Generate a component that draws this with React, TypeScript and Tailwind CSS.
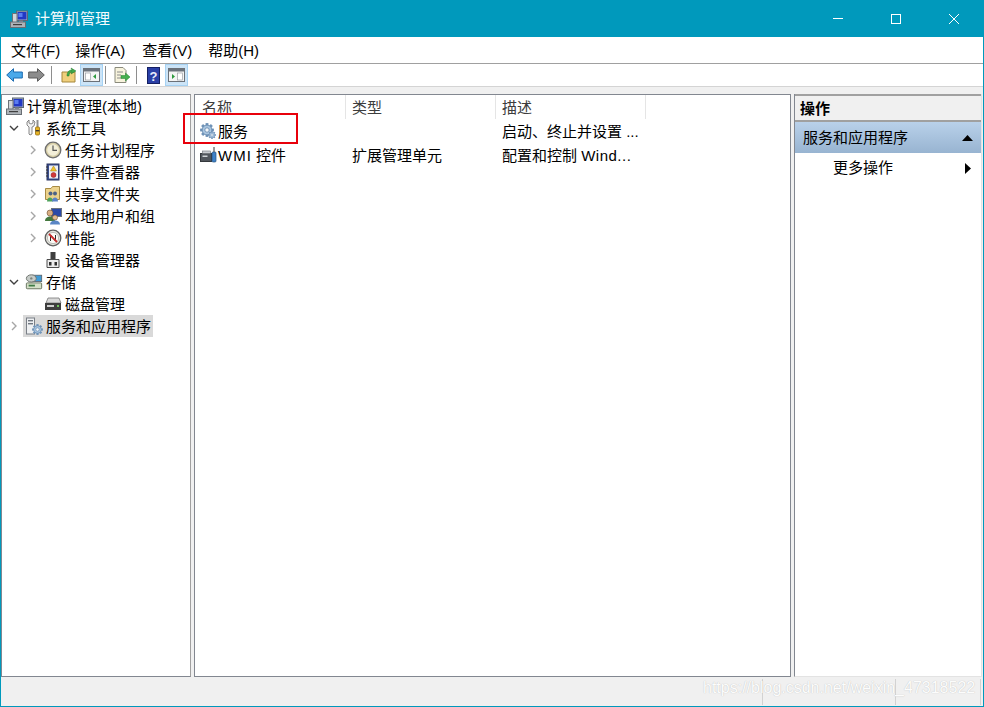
import React from "react";

const FONT = "font-['Liberation_Sans','Noto_Sans_CJK_SC',sans-serif]";

const Computer = () => (
  <svg width="18" height="18" viewBox="0 0 18 18">
    <rect x="6.5" y="1" width="11" height="9.5" fill="#aab2be" stroke="#5b6675" />
    <rect x="7.5" y="2" width="9" height="7.5" fill="#2238c4" />
    <rect x="8.5" y="3" width="4" height="4" fill="#5a7cf0" />
    <rect x="2.5" y="3.5" width="4.5" height="10" fill="#d2d5d8" stroke="#6d7278" />
    <rect x="0.5" y="12" width="15" height="5.5" fill="#aeb3b8" stroke="#686e74" />
    <rect x="3" y="14" width="9" height="1.2" fill="#3f3f3f" />
    <rect x="9" y="10.5" width="4" height="1.5" fill="#7c8490" />
  </svg>
);
const Tools = () => (
  <svg width="16" height="18" viewBox="0 0 16 18">
    <path d="M3 1 L3 4 L5 5 L7 4 L7 1 L9 3 L8 7 L6 8 L6 15 L4 16 L3 15 L3 8 L1 6 L1 3 Z" fill="#f2f2f2" stroke="#6b6b6b" strokeWidth="0.8" />
    <rect x="10.5" y="1" width="2" height="7" fill="#8f8f8f" />
    <rect x="9.5" y="8" width="4" height="8" rx="1" fill="#e6b325" stroke="#97700e" strokeWidth="0.8" />
    <rect x="9.7" y="11" width="3.6" height="1.4" fill="#3a3a3a" />
  </svg>
);
const Clock = () => (
  <svg width="18" height="18" viewBox="0 0 18 18">
    <circle cx="9" cy="9" r="7.8" fill="#d8cfa8" stroke="#6f6f6f" strokeWidth="1.3" />
    <circle cx="9" cy="9" r="5.8" fill="#f3efd9" />
    <path d="M9 4.5V9.3H13" fill="none" stroke="#555" strokeWidth="1.2" />
  </svg>
);
const EventLog = () => (
  <svg width="16" height="18" viewBox="0 0 16 18">
    <rect x="2" y="1" width="12" height="16" fill="#3b4f8f" stroke="#2a3560" />
    <rect x="4" y="2.5" width="9" height="13" fill="#eef0f5" />
    <path d="M8.5 3 L11.5 8 H5.5Z" fill="#efc22c" stroke="#a27e10" strokeWidth="0.5" />
    <circle cx="8.5" cy="12" r="2.5" fill="#d23a3a" stroke="#8c1f1f" strokeWidth="0.5" />
    <path d="M1 4h2M1 7h2M1 10h2M1 13h2" stroke="#333" strokeWidth="1" />
  </svg>
);
const SharedFolder = () => (
  <svg width="18" height="18" viewBox="0 0 18 18">
    <path d="M1.5 3.5 H7 L8.5 1.5 H15.5 V14.5 H1.5Z" fill="#ecd28c" stroke="#a88b45" />
    <circle cx="6.5" cy="8.5" r="2" fill="#4d6285" />
    <circle cx="11" cy="8.5" r="2" fill="#4d6285" />
    <path d="M3 16.5 C3 11 9 11 9 16.5Z" fill="#4fa25b" />
    <path d="M8 16.5 C8 11 14 11 14 16.5Z" fill="#5b83c6" />
  </svg>
);
const Users = () => (
  <svg width="18" height="18" viewBox="0 0 18 18">
    <rect x="7.5" y="1.5" width="10" height="8" fill="#2a49a8" stroke="#6b7380" />
    <circle cx="6" cy="6" r="3" fill="#d9ae83" stroke="#6c4e30" strokeWidth="0.6" />
    <path d="M1 14 C1 8 11 8 11 14Z" fill="#44783e" />
    <circle cx="11" cy="10.5" r="2.5" fill="#e3bb92" stroke="#6c4e30" strokeWidth="0.6" />
    <path d="M6 17.5 C6 12 16 12 16 17.5Z" fill="#5a86c5" />
  </svg>
);
const Perf = () => (
  <svg width="18" height="18" viewBox="0 0 18 18">
    <circle cx="9" cy="9" r="7.8" fill="#e4e4dc" stroke="#5f5f5f" strokeWidth="1.3" />
    <circle cx="9" cy="9" r="5.6" fill="#fbfbf6" stroke="#9a9a9a" strokeWidth="0.6" />
    <path d="M6.5 12V6L11.5 12V6" fill="none" stroke="#2b2b2b" strokeWidth="1" />
    <path d="M5 5L13 13" stroke="#c92a2a" strokeWidth="1.8" />
  </svg>
);
const DeviceMgr = () => (
  <svg width="16" height="18" viewBox="0 0 16 18">
    <rect x="5.5" y="1" width="5" height="7" fill="#3f3f3f" />
    <path d="M2 8.5 H14 V16.5 H2Z" fill="#ededed" stroke="#4d4d4d" />
    <rect x="4" y="11" width="2.5" height="3.5" fill="#2f2f2f" />
    <rect x="9.5" y="11" width="2.5" height="3.5" fill="#2f2f2f" />
  </svg>
);
const Storage = () => (
  <svg width="20" height="18" viewBox="0 0 20 18">
    <rect x="8.5" y="1.5" width="10" height="7" fill="#3f9bd6" stroke="#5b6772" />
    <ellipse cx="7" cy="5" rx="5.5" ry="4" fill="#c6cbc7" stroke="#6a6f6a" />
    <circle cx="7" cy="5" r="1.3" fill="#7c827c" />
    <rect x="1.5" y="10" width="17" height="6.5" rx="1" fill="#d5e0c8" stroke="#5f6b56" />
    <rect x="4" y="12" width="7" height="2" fill="#3e7b45" />
  </svg>
);
const Disk = () => (
  <svg width="18" height="18" viewBox="0 0 18 18">
    <path d="M4 3 H15 L17 8 H2Z" fill="#d9d9d9" stroke="#777" strokeWidth="0.8" />
    <rect x="1" y="8" width="16" height="7" fill="#3e3e3e" />
    <rect x="3" y="10" width="7" height="2" fill="#cfcfcf" />
    <rect x="13" y="10" width="2" height="2" fill="#6ec35a" />
  </svg>
);
const Gear = ({ size = 14 }: { size?: number }) => {
  const teeth = [0, 45, 90, 135, 180, 225, 270, 315];
  return (
    <svg width={size} height={size} viewBox="0 0 16 16" className="block">
      {teeth.map((a) => (
        <rect key={a} x="6.4" y="0.1" width="3.2" height="3.8" fill="#6f93b8" transform={`rotate(${a} 8 8)`} />
      ))}
      <circle cx="8" cy="8" r="5.6" fill="#a9c5e0" stroke="#5f84aa" strokeWidth="0.9" />
      <circle cx="8" cy="8" r="2.5" fill="#f4f7fa" stroke="#5f84aa" strokeWidth="0.9" />
    </svg>
  );
};
const ServiceIcon = () => (
  <span className="relative block w-[16px] h-[16px] shrink-0">
    <Gear size={14} />
    <span className="absolute right-0 bottom-0"><Gear size={8} /></span>
  </span>
);
const ServicesApps = () => (
  <span className="relative block w-[18px] h-[18px]">
    <svg width="18" height="18" viewBox="0 0 18 18" className="block">
      <rect x="1.5" y="1" width="8" height="16" fill="#eef0f2" stroke="#7b8087" />
      <rect x="3" y="3" width="5" height="1.4" fill="#6f7680" />
      <rect x="3" y="6" width="5" height="1.4" fill="#6f7680" />
    </svg>
    <span className="absolute right-0 bottom-0"><Gear size={11} /></span>
  </span>
);
const Wmi = () => (
  <svg width="17" height="18" viewBox="0 0 17 18" className="block shrink-0">
    <rect x="0.5" y="7.5" width="11" height="8" fill="#51565c" stroke="#34383c" />
    <rect x="2.5" y="5" width="8" height="2.5" fill="#c9ccd0" stroke="#6b7076" strokeWidth="0.6" />
    <rect x="2.5" y="9.5" width="5" height="1.5" fill="#cfd3d6" />
    <path d="M14 1 V6" stroke="#9a9a9a" strokeWidth="2" />
    <rect x="12" y="6" width="4" height="10" rx="1" fill="#3f82c9" stroke="#25537f" strokeWidth="0.7" />
  </svg>
);
const Chevron = ({ open }: { open?: boolean }) => (
  <svg width="10" height="10" viewBox="0 0 10 10" className="block">
    {open ? (
      <path d="M1 3 L5 7 L9 3" fill="none" stroke="#404040" strokeWidth="1.4" />
    ) : (
      <path d="M3 1 L7 5 L3 9" fill="none" stroke="#a6a6a6" strokeWidth="1.4" />
    )}
  </svg>
);

type Row = { label: string; indent: string; chevron?: "open" | "closed"; icon: React.ReactNode; selected?: boolean };

const rows: Row[] = [
  { label: "计算机管理(本地)", indent: "pl-[2px]", icon: <Computer /> },
  { label: "系统工具", indent: "pl-[7px]", chevron: "open", icon: <Tools /> },
  { label: "任务计划程序", indent: "pl-[26px]", chevron: "closed", icon: <Clock /> },
  { label: "事件查看器", indent: "pl-[26px]", chevron: "closed", icon: <EventLog /> },
  { label: "共享文件夹", indent: "pl-[26px]", chevron: "closed", icon: <SharedFolder /> },
  { label: "本地用户和组", indent: "pl-[26px]", chevron: "closed", icon: <Users /> },
  { label: "性能", indent: "pl-[26px]", chevron: "closed", icon: <Perf /> },
  { label: "设备管理器", indent: "pl-[40px]", icon: <DeviceMgr /> },
  { label: "存储", indent: "pl-[7px]", chevron: "open", icon: <Storage /> },
  { label: "磁盘管理", indent: "pl-[40px]", icon: <Disk /> },
  { label: "服务和应用程序", indent: "pl-[7px]", chevron: "closed", icon: <ServicesApps />, selected: true },
];

const TreeRow = ({ row }: { row: Row }) => (
  <div className={`h-[22px] flex items-center ${row.indent}`}>
    {row.chevron && (
      <span className="w-[10px] mr-[4px] shrink-0">
        <Chevron open={row.chevron === "open"} />
      </span>
    )}
    <span className={`flex items-center h-[22px] pl-[2px] pr-[2px] ${row.selected ? "bg-[#d9d9d9]" : ""}`}>
      <span className="w-[18px] h-[18px] flex items-center justify-center shrink-0 mr-[3px]">{row.icon}</span>
      <span className="whitespace-nowrap pt-px">{row.label}</span>
    </span>
  </div>
);

const ToolSep = ({ first }: { first?: boolean }) => (
  <div className={`w-px h-[18px] bg-[#8e8e8e] mr-[5px] ${first ? "ml-[6px]" : "ml-[2px]"}`} />
);
const ToolBtn = ({ active, children }: { active?: boolean; children: React.ReactNode }) => (
  <div className={`w-[23px] h-[22px] flex items-center justify-center border ${active ? "bg-[#cce4f7] border-[#a6d2f3]" : "border-transparent"}`}>
    {children}
  </div>
);

const Pane = ({ side }: { side: "left" | "right" }) => (
  <svg width="17" height="14" viewBox="0 0 17 14" className="block">
    <rect x="0.5" y="0.5" width="16" height="13" fill="#f4f4f4" stroke="#6b7178" />
    <rect x="1" y="1" width="15" height="2.5" fill="#6a727c" />
    {side === "left" ? (
      <>
        <rect x="2.5" y="5" width="5" height="7" fill="#fff" stroke="#8b9097" strokeWidth="0.6" />
        <path d="M13 6 V11 L10 8.5Z" fill="#2d9a3e" />
      </>
    ) : (
      <>
        <path d="M4 6 V11 L7 8.5Z" fill="#2d9a3e" />
        <rect x="9.5" y="5" width="5" height="7" fill="#fff" stroke="#8b9097" strokeWidth="0.6" />
      </>
    )}
  </svg>
);

const Arrow = ({ dir, fill, stroke }: { dir: "l" | "r"; fill: string; stroke: string }) => (
  <svg width="17" height="14" viewBox="0 0 17 14" className="block">
    <path
      d={dir === "l" ? "M0.7 7 L7.5 0.7 V4 H16.3 V10 H7.5 V13.3Z" : "M16.3 7 L9.5 0.7 V4 H0.7 V10 H9.5 V13.3Z"}
      fill={fill}
      stroke={stroke}
    />
  </svg>
);

export default function App() {
  return (
    <div className={`relative w-[984px] h-[707px] flex flex-col overflow-hidden border border-[#0099bc] border-t-0 bg-[#f0f0f0] text-[15px] leading-[22px] text-black ${FONT}`}>
      {/* Title bar */}
      <div className="h-[37px] shrink-0 flex items-center bg-[#0099bc] text-[#f4fbfd]">
        <span className="ml-[9px] mr-[7px] flex"><Computer /></span>
        <span>计算机管理</span>
        <div className="ml-auto flex items-center">
          <div className="w-[58px] flex justify-center"><div className="w-[10px] h-px bg-white" /></div>
          <div className="w-[58px] flex justify-center"><div className="w-[10px] h-[10px] border border-white" /></div>
          <div className="w-[58px] flex justify-center">
            <svg width="10" height="10" viewBox="0 0 10 10"><path d="M0 0L10 10M10 0L0 10" stroke="#fff" strokeWidth="1" /></svg>
          </div>
        </div>
      </div>
      {/* Menu */}
      <div className="h-[27px] shrink-0 flex items-center bg-white border-b border-[#a0a0a0] pl-[10px] pt-px">
        <span className="mr-[15px]">文件(F)</span>
        <span className="mr-[17px]">操作(A)</span>
        <span className="mr-[16px]">查看(V)</span>
        <span>帮助(H)</span>
      </div>
      {/* Toolbar */}
      <div className="h-[23px] shrink-0 flex items-center bg-white border-b border-[#d4d4d4] pl-[5px]">
        <span className="flex"><Arrow dir="l" fill="#4aa9ea" stroke="#1c6bb0" /></span>
        <span className="flex ml-[5px]"><Arrow dir="r" fill="#8c8c8c" stroke="#5a5a5a" /></span>
        <ToolSep first />
        <ToolBtn>
          <svg width="16" height="16" viewBox="0 0 16 16" className="block">
            <path d="M1 5 H14 V15 H1Z" fill="#f0cf7c" stroke="#a5873c" />
            <path d="M6 9 C6 5 8 3 11 3 L10 1 L15 4 L10 7 L11 5 C9 5 8 7 8 9Z" fill="#3fa84a" stroke="#1e7a2a" strokeWidth="0.5" />
          </svg>
        </ToolBtn>
        <ToolBtn active><Pane side="left" /></ToolBtn>
        <ToolSep />
        <ToolBtn>
          <svg width="17" height="16" viewBox="0 0 17 16" className="block">
            <path d="M1 0.5 H9 L12 3.5 V15.5 H1Z" fill="#f7f3dd" stroke="#8a8a7c" />
            <path d="M3 5h6M3 8h4M3 11h4" stroke="#8c8c8c" />
            <path d="M7 8.5 H11.5 V6 L16 10 L11.5 14 V11.5 H7Z" fill="#46b04f" stroke="#23802e" strokeWidth="0.5" />
          </svg>
        </ToolBtn>
        <ToolSep />
        <ToolBtn>
          <svg width="13" height="17" viewBox="0 0 13 17" className="block">
            <rect x="0.5" y="0.5" width="12" height="16" fill="#2a3fa6" stroke="#141f63" />
            <text x="6.5" y="13.5" textAnchor="middle" fontSize="13" fontWeight="700" fill="#e9ecfa" fontFamily="Liberation Sans">?</text>
          </svg>
        </ToolBtn>
        <ToolBtn active><Pane side="right" /></ToolBtn>
      </div>
      {/* Panels */}
      <div className="flex-1 min-h-0 flex gap-[3px] pt-[7px]">
        <div className="w-[190px] shrink-0 bg-white border border-[#828790] border-r-[#a0a0a0]">
          {rows.map((r) => <TreeRow key={r.label} row={r} />)}
        </div>
        <div className="w-[597px] shrink-0 bg-white border border-[#828790] flex flex-col">
          <div className="h-[24px] flex items-center text-[#3c3c3c]">
            <div className="w-[151px] h-full pl-[7px] pt-px border-r border-[#e5e5e5] flex items-center">名称</div>
            <div className="w-[150px] h-full pl-[6px] pt-px border-r border-[#e5e5e5] flex items-center">类型</div>
            <div className="w-[150px] h-full pl-[6px] pt-px border-r border-[#e5e5e5] flex items-center">描述</div>
          </div>
          <div className="h-[24px] flex items-center">
            <div className="w-[151px] pl-[5px] flex items-center gap-[2px]"><ServiceIcon /><span className="pt-px">服务</span></div>
            <div className="w-[150px]" />
            <div className="pl-[6px] pt-px whitespace-nowrap">启动、终止并设置 ...</div>
          </div>
          <div className="h-[24px] flex items-center">
            <div className="w-[151px] pl-[5px] flex items-center gap-px"><Wmi /><span className="pt-px"><span className="tracking-[1px]">WMI</span> 控件</span></div>
            <div className="w-[150px] pl-[6px] pt-px">扩展管理单元</div>
            <div className="pl-[6px] pt-px whitespace-nowrap">配置和控制 <span className="tracking-[0.5px]">Wind...</span></div>
          </div>
        </div>
        <div className="flex-1 mr-px bg-white border border-[#e3e3e3] border-l-[#828790] border-t-0 flex flex-col">
          <div className="h-[28px] shrink-0 bg-[#f0f0f0] border-t-2 border-b-2 border-[#a0a0a0] font-bold pl-[5px] pt-px flex items-center">操作</div>
          <div className="h-[31px] shrink-0 bg-gradient-to-b from-[#b9d1ea] to-[#98b4d1] flex items-center pl-[8px] pr-[8px] justify-between">
            <span>服务和应用程序</span>
            <svg width="11" height="6" viewBox="0 0 11 6"><path d="M5.5 0L11 6H0Z" fill="#000" /></svg>
          </div>
          <div className="h-[30px] shrink-0 flex items-center pl-[38px] pr-[10px] justify-between">
            <span>更多操作</span>
            <svg width="6" height="11" viewBox="0 0 6 11"><path d="M0 0L6 5.5L0 11Z" fill="#000" /></svg>
          </div>
        </div>
      </div>
      {/* Status bar */}
      <div className="h-[29px] shrink-0 flex bg-[#f0f0f0] pt-[2px]">
        <div className="w-[762px] h-[26px] border-r border-[#d2d2d2]" />
        <div className="w-[133px] h-[26px] border-r border-[#d2d2d2]" />
        <div className="w-[85px] h-[26px] border-r border-[#d2d2d2]" />
      </div>
      {/* Watermark and annotation overlays */}
      <div className="absolute left-[702px] top-[676px] text-[16px] leading-[24px] text-[#fcfcfc] [text-shadow:0_0_1px_#b4b4b4] whitespace-nowrap font-['Liberation_Sans',sans-serif]">
        https://blog.csdn.net/weixin_47318522
      </div>
      <div className="absolute left-[182px] top-[113px] w-[115px] h-[31px] border-2 border-[#e8000b]" />
    </div>
  );
}
